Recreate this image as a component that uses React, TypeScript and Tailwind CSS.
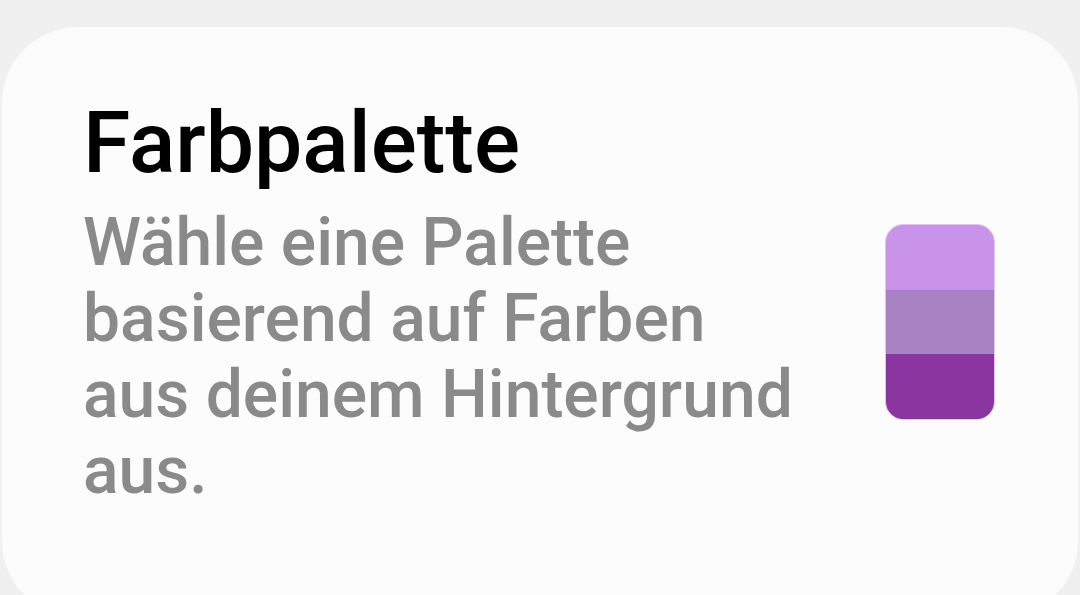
export default function App() {
  return (
    <div className="w-[1080px] h-[595px] overflow-hidden bg-[#f0f0f0] pt-[27px] px-[2px]" style={{ fontFamily: "Roboto, 'Noto Sans', sans-serif" }}>
      <div className="h-[590px] bg-[#fcfcfc] rounded-[76px] flex items-center pl-[81px] pr-[83px]">
        <div className="flex-1 self-start pt-[66px]">
          <div className="text-[86px] leading-[100px] font-medium text-black">Farbpalette</div>
          <div className="mt-[12px] text-[66px] leading-[76px] font-medium text-[#8a8a8a] w-[725px]">
            Wähle eine Palette basierend auf Farben aus deinem Hintergrund aus.
          </div>
        </div>
        <div className="w-[110px] h-[196px] rounded-[18px] border-[1.5px] border-[#dcc6e4] overflow-hidden flex flex-col">
          <div className="flex-1 bg-[#c993ea]" />
          <div className="flex-1 bg-[#a982c4]" />
          <div className="flex-1 bg-[#8b35a0]" />
        </div>
      </div>
    </div>
  );
}
